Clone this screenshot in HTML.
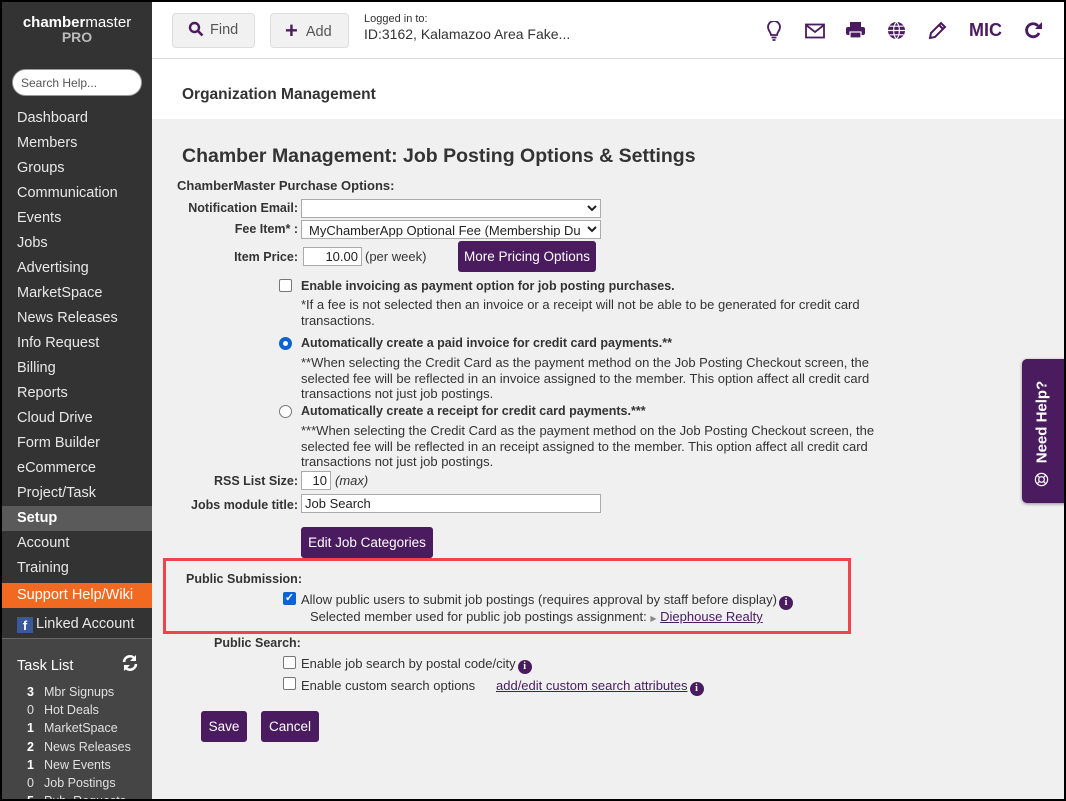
<!DOCTYPE html>
<html><head><meta charset="utf-8"><style>
*{box-sizing:border-box;margin:0;padding:0}
body{width:1066px;height:801px;overflow:hidden;background:#000;font-family:"Liberation Sans",sans-serif;position:relative}
.wrap{position:absolute;left:2px;top:2px;width:1062px;height:797px;background:#f0f0f0;overflow:hidden}
.sb{position:absolute;left:0;top:0;width:150px;height:797px;background:#333}
.sb .low{position:absolute;left:0;top:636px;width:150px;height:170px;background:#454545;border-top:1px solid #666}
.logo{position:absolute;top:14px;width:150px;text-align:center;color:#fff;font-size:15px;line-height:14px}
.logo b{font-weight:bold}
.logo .pro{color:#bbb;font-weight:bold;font-size:14px}
.search{position:absolute;left:10px;top:67px;width:130px;height:27px;border-radius:14px;background:#fff;border:1px solid #999;font-size:12px;color:#555;padding:6px 8px}
.nav{position:absolute;left:0;top:104px;width:150px}
.nav div{height:25px;line-height:24px;padding-left:15px;color:#e8e8e8;font-size:14.5px}
.nav .sel{background:#5a5a5a;color:#fff;font-weight:bold}
.nav .sup{background:#f26a21;color:#fff;margin-top:2px}
.fb{display:inline-block;width:16px;height:16px;background:#3b5998;color:#fff;font-weight:bold;text-align:center;font-size:13px;line-height:17px;vertical-align:-2px;margin-right:3px}
.tl{position:absolute;left:15px;top:656px;color:#fff;font-size:14.5px}
.tasks{position:absolute;left:25px;top:681px;font-size:12.5px;color:#e0e0e0}
.tasks div{height:18.2px;line-height:18px}
.tasks span{display:inline-block;width:17px}
.tasks b{display:inline-block;width:17px;color:#fff}
.hdr{position:absolute;left:150px;top:0;width:912px;height:57px;background:#fff;border-bottom:1px solid #ddd}
.btn{position:absolute;top:11px;height:35px;background:#f1f1f1;border:1px solid #ddd;border-radius:4px;color:#555;font-size:14.5px;line-height:33px}
.orgbar{position:absolute;left:150px;top:57px;width:912px;height:60px;background:#fff;font-weight:bold;font-size:15.5px;color:#333;padding:27px 0 0 30px}
.c{position:absolute;font-size:13px;color:#333;white-space:nowrap}
.lbl{font-weight:bold;text-align:right;font-size:12.5px}
.bd{font-weight:bold;font-size:12.5px}
.pbtn{position:absolute;background:#4a1b5e;color:#fff;font-size:13.5px;border-radius:3px;text-align:center}
select,.inp{position:absolute;height:19px;border:1px solid #aaa;background:#fff;font-size:13px;font-family:"Liberation Sans",sans-serif;color:#222;padding:1px 3px}
.cb{position:absolute;width:13px;height:13px;border:1px solid #777;border-radius:2px;background:#fff}
.rd{position:absolute;width:13px;height:13px;border:1px solid #777;border-radius:50%;background:#fff}
.info{display:inline-block;width:14px;height:14px;border-radius:50%;background:#4a1b5e;color:#fff;font-size:10px;font-weight:bold;text-align:center;line-height:14px;vertical-align:-1px;font-family:"Liberation Serif",serif;margin-left:2px}
a{color:#4a1b5e}
</style></head><body><div class="wrap">
<div class="sb">
 <div class="logo"><b>chamber</b>master<br><span class="pro">PRO</span></div>
 <div class="search">Search Help...</div>
 <div class="nav">
  <div>Dashboard</div><div>Members</div><div>Groups</div><div>Communication</div><div>Events</div><div>Jobs</div><div>Advertising</div><div>MarketSpace</div><div>News Releases</div><div>Info Request</div><div>Billing</div><div>Reports</div><div>Cloud Drive</div><div>Form Builder</div><div>eCommerce</div><div>Project/Task</div><div class="sel">Setup</div><div>Account</div><div>Training</div><div class="sup">Support Help/Wiki</div><div style="margin-top:4px;height:28px"><span class="fb">f</span>Linked Account</div>
 </div>
 <div class="low"></div>
 <div class="tl">Task List</div>
 <svg style="position:absolute;left:119px;top:652px" width="18" height="18" viewBox="0 0 18 18"><path d="M3 8a6 6 0 0 1 11-3M15 10a6 6 0 0 1-11 3" stroke="#fff" stroke-width="2.6" fill="none"/><path d="M15 1v6h-6z M3 17v-6h6z" fill="#fff"/></svg>
 <div class="tasks">
  <div><b>3</b>Mbr Signups</div><div><span>0</span>Hot Deals</div><div><b>1</b>MarketSpace</div><div><b>2</b>News Releases</div><div><b>1</b>New Events</div><div><span>0</span>Job Postings</div><div><b>5</b>Pub. Requests</div>
 </div>
</div>
<div class="hdr">
 <div class="btn" style="left:20px;width:83px;padding-left:15px"><svg width="16" height="16" viewBox="0 0 16 16" style="vertical-align:-3px;margin-right:6px"><circle cx="6.5" cy="6.5" r="4.5" stroke="#4a1b5e" stroke-width="2.4" fill="none"/><path d="M10 10l4.5 4.5" stroke="#4a1b5e" stroke-width="2.6"/></svg>Find</div>
 <div class="btn" style="left:118px;width:79px;padding-left:14px"><span style="color:#4a1b5e;font-size:22px;font-weight:bold;vertical-align:-2px;margin-right:8px">+</span>Add</div>
 <div style="position:absolute;left:212px;top:11px;font-size:11px;color:#333">Logged in to:</div>
 <div style="position:absolute;left:212px;top:24px;font-size:14px;color:#333">ID:3162, Kalamazoo Area Fake...</div>
 <svg style="position:absolute;left:614px;top:19px" width="16" height="20" viewBox="0 0 16 20"><path d="M5 14c0-3-3-4-3-8a6 6 0 0 1 12 0c0 4-3 5-3 8z" stroke="#4a1b5e" stroke-width="1.8" fill="none"/><path d="M5.5 16.5h5M6.5 19h3" stroke="#4a1b5e" stroke-width="1.8"/></svg>
 <svg style="position:absolute;left:653px;top:21px" width="20" height="16" viewBox="0 0 20 16"><rect x="1" y="1.5" width="18" height="13" stroke="#4a1b5e" stroke-width="1.8" fill="none"/><path d="M1 2l9 7 9-7" stroke="#4a1b5e" stroke-width="1.8" fill="none"/></svg>
 <svg style="position:absolute;left:694px;top:19px" width="19" height="18" viewBox="0 0 19 18"><rect x="4" y="1" width="11" height="5" fill="#4a1b5e"/><rect x="0" y="6" width="19" height="8" rx="2" fill="#4a1b5e"/><rect x="4" y="11" width="11" height="6" fill="#4a1b5e" stroke="#fff" stroke-width="1.2"/></svg>
 <svg style="position:absolute;left:735px;top:19px" width="19" height="19" viewBox="0 0 20 20"><circle cx="10" cy="10" r="9" fill="#4a1b5e"/><path d="M1 10h18M10 1c-4 4-4 14 0 18M10 1c4 4 4 14 0 18M2.5 5.5h15M2.5 14.5h15" stroke="#fff" stroke-width="1.2" fill="none"/></svg>
 <svg style="position:absolute;left:776px;top:19px" width="19" height="19" viewBox="0 0 19 19"><path d="M2 17l1-5L13 2l4 4L7 16z" stroke="#4a1b5e" stroke-width="2" fill="none"/><path d="M11 4l4 4" stroke="#4a1b5e" stroke-width="2"/></svg>
 <div style="position:absolute;left:817px;top:18px;font-weight:bold;font-size:18px;color:#4a1b5e">MIC</div>
 <svg style="position:absolute;left:873px;top:19px" width="18" height="19" viewBox="0 0 18 19"><path d="M14 12a6.5 6.5 0 1 1-1-7" stroke="#4a1b5e" stroke-width="2.8" fill="none"/><path d="M17 1v7h-7z" fill="#4a1b5e"/></svg>
</div>
<div class="orgbar">Organization Management</div>
<div class="c" style="left:180px;top:143px;font-size:19.5px;font-weight:bold;color:#333">Chamber Management: Job Posting Options &amp; Settings</div>
<div class="c lbl" style="left:175px;top:176px;font-size:13px">ChamberMaster Purchase Options:</div>
<div class="c lbl" style="left:100px;top:199px;width:196px">Notification Email:</div>
<select style="left:299px;top:197px;width:300px"></select>
<div class="c lbl" style="left:100px;top:220px;width:196px">Fee Item* :</div>
<select style="left:299px;top:218px;width:300px"><option>MyChamberApp Optional Fee (Membership Due</option></select>
<div class="c lbl" style="left:100px;top:248px;width:196px">Item Price:</div>
<div class="inp" style="left:301px;top:245px;width:59px;text-align:right">10.00</div>
<div class="c" style="left:363px;top:247px">(per week)</div>
<div class="pbtn" style="left:456px;top:239px;width:138px;height:31px;line-height:31px">More Pricing Options</div>
<div class="cb" style="left:277px;top:277px"></div>
<div class="c bd" style="left:299px;top:277px">Enable invoicing as payment option for job posting purchases.</div>
<div class="c" style="left:299px;top:295px;line-height:15.5px">*If a fee is not selected then an invoice or a receipt will not be able to be generated for credit card<br>transactions.</div>
<div class="rd" style="left:277px;top:335px;border:4px solid #0b63d4"></div>
<div class="c bd" style="left:299px;top:334px">Automatically create a paid invoice for credit card payments.**</div>
<div class="c" style="left:299px;top:353px;line-height:15.5px">**When selecting the Credit Card as the payment method on the Job Posting Checkout screen, the<br>selected fee will be reflected in an invoice assigned to the member. This option affect all credit card<br>transactions not just job postings.</div>
<div class="rd" style="left:277px;top:403px"></div>
<div class="c bd" style="left:299px;top:402px">Automatically create a receipt for credit card payments.***</div>
<div class="c" style="left:299px;top:421px;line-height:15.5px">***When selecting the Credit Card as the payment method on the Job Posting Checkout screen, the<br>selected fee will be reflected in an receipt assigned to the member. This option affect all credit card<br>transactions not just job postings.</div>
<div class="c lbl" style="left:100px;top:472px;width:196px">RSS List Size:</div>
<div class="inp" style="left:299px;top:469px;width:30px;text-align:right">10</div>
<div class="c" style="left:333px;top:471px;font-style:italic">(max)</div>
<div class="c lbl" style="left:100px;top:496px;width:196px">Jobs module title:</div>
<div class="inp" style="left:299px;top:492px;width:300px">Job Search</div>
<div class="pbtn" style="left:299px;top:525px;width:132px;height:31px;line-height:31px">Edit Job Categories</div>
<div style="position:absolute;left:161px;top:556px;width:688px;height:76px;border:3px solid #f0444c"></div>
<div class="c lbl" style="left:184px;top:570px">Public Submission:</div>
<div class="cb" style="left:281px;top:590px;background:#0b63d4;border-color:#0b63d4;color:#fff;font-size:11px;line-height:11px;text-align:center;font-weight:bold">✓</div>
<div class="c" style="left:299px;top:590px">Allow public users to submit job postings (requires approval by staff before display)<span class="info">i</span></div>
<div class="c" style="left:308px;top:607px">Selected member used for public job postings assignment: <span style="color:#888;font-size:8px">▶</span> <a href="#">Diephouse Realty</a></div>
<div class="c lbl" style="left:212px;top:634px">Public Search:</div>
<div class="cb" style="left:281px;top:654px"></div>
<div class="c" style="left:299px;top:654px">Enable job search by postal code/city<span class="info">i</span></div>
<div class="cb" style="left:281px;top:675px"></div>
<div class="c" style="left:299px;top:676px">Enable custom search options</div>
<div class="c" style="left:494px;top:676px"><a href="#">add/edit custom search attributes</a><span class="info">i</span></div>
<div class="pbtn" style="left:199px;top:709px;width:46px;height:31px;line-height:31px">Save</div>
<div class="pbtn" style="left:259px;top:709px;width:58px;height:31px;line-height:31px">Cancel</div>
<div style="position:absolute;left:1020px;top:357px;width:44px;height:144px;background:#4a1b5e;border-radius:5px 0 0 5px;box-shadow:0 1px 3px rgba(0,0,0,.4)"></div>
<div style="position:absolute;left:1040px;top:420px;transform:translate(-50%,-50%) rotate(-90deg);color:#fff;font-weight:bold;font-size:15px;white-space:nowrap">Need Help?</div>
<svg style="position:absolute;left:1032px;top:470px" width="15" height="15" viewBox="0 0 16 16"><circle cx="8" cy="8" r="6.5" stroke="#fff" stroke-width="1.3" fill="none"/><circle cx="8" cy="8" r="3" stroke="#fff" stroke-width="1.3" fill="none"/><path d="M3.5 3.5l2.4 2.4M12.5 3.5l-2.4 2.4M3.5 12.5l2.4-2.4M12.5 12.5l-2.4-2.4" stroke="#fff" stroke-width="1.3"/></svg>
</div></body></html>
